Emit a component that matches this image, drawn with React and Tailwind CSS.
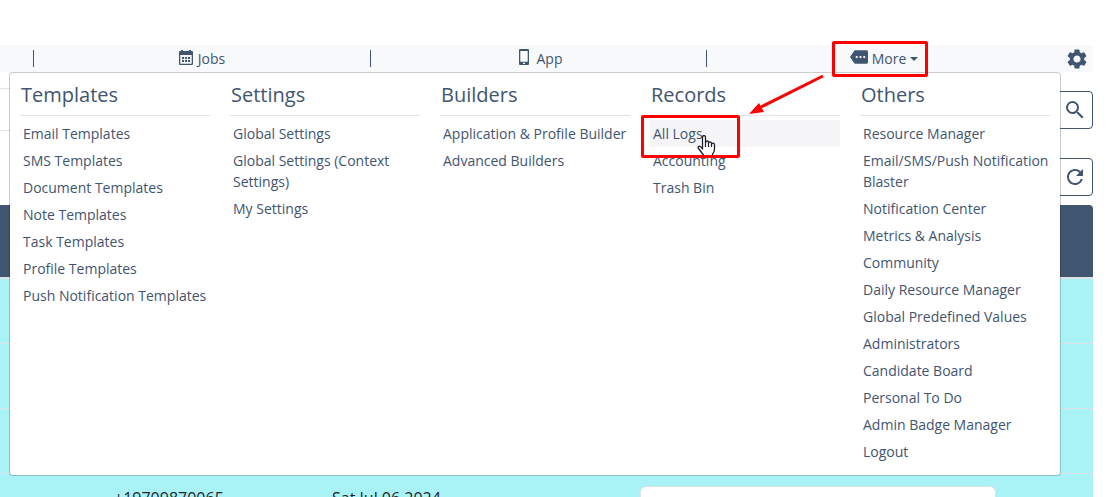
import React from 'react';
import { MdMore, MdRefresh, MdSearch, MdSettings } from 'react-icons/md';

const menuColumns = [
  {
    title: 'Templates',
    items: [
      'Email Templates',
      'SMS Templates',
      'Document Templates',
      'Note Templates',
      'Task Templates',
      'Profile Templates',
      'Push Notification Templates',
    ],
  },
  {
    title: 'Settings',
    items: [
      'Global Settings',
      'Global Settings (Context Settings)',
      'My Settings',
    ],
  },
  {
    title: 'Builders',
    items: ['Application & Profile Builder', 'Advanced Builders'],
  },
  {
    title: 'Records',
    items: ['All Logs', 'Accounting', 'Trash Bin'],
  },
  {
    title: 'Others',
    items: [
      'Resource Manager',
      'Email/SMS/Push Notification Blaster',
      'Notification Center',
      'Metrics & Analysis',
      'Community',
      'Daily Resource Manager',
      'Global Predefined Values',
      'Administrators',
      'Candidate Board',
      'Personal To Do',
      'Admin Badge Manager',
      'Logout',
    ],
  },
];

function CalendarIcon() {
  return (
    <svg className="mb-[3px]" width="14" height="15" viewBox="0 0 14 15" fill="currentColor">
      <path d="M2 0h2v1h6V0h2v1h1q1 0 1 1v12q0 1-1 1H1q-1 0-1-1V2q0-1 1-1h1zM1.300 5v8.700h11.400V5z" />
      <path d="M3 7h2v2H3zM6 7h2v2H6zM9 7h2v2H9zM3 10h2v2H3zM6 10h2v2H6zM9 10h2v2H9z" />
    </svg>
  );
}

function PhoneIcon() {
  return (
    <svg className="mx-1 mb-[3px]" width="10" height="16" viewBox="0 0 10 16" fill="currentColor">
      <path
        fillRule="evenodd"
        d="M1 0h8q1 0 1 1v14q0 1-1 1H1q-1 0-1-1V1q0-1 1-1zM1.300 2v10.700h7.400V2zM4 13.700v1.300h2v-1.300z"
      />
    </svg>
  );
}

function NavBar() {
  return (
    <nav className="grid grid-cols-[34px_337fr_336fr_354fr_32px] items-center h-[27px] rounded-r bg-[#f8f9fb] text-sm">
      <span className="h-[17px] border-r border-[#3f5570]" />
      <a
        href="#jobs"
        className="flex items-center justify-center gap-[5px] h-[17px] border-r border-[#3f5570]"
      >
        <CalendarIcon />
        Jobs
      </a>
      <a
        href="#app"
        className="flex items-center justify-center gap-1 h-[17px] border-r border-[#3f5570]"
      >
        <PhoneIcon />
        App
      </a>
      <button
        type="button"
        aria-expanded="true"
        className="flex items-center justify-center gap-1 h-[17px]"
      >
        <MdMore className="mb-[3px] size-[18px]" />
        More
        <span className="border-x-4 border-t-4 border-x-transparent border-t-[#3f5570]" />
      </button>
      <button
        type="button"
        aria-label="Preferences"
        className="flex justify-center"
      >
        <MdSettings className="size-6" />
      </button>
    </nav>
  );
}

function MegaMenu() {
  return (
    <div className="absolute top-[72px] left-[9px] right-[51px] z-10 grid grid-cols-5 rounded border border-black/20 bg-white bg-clip-padding pt-2 pb-[10px]">
      {menuColumns.map(({ title, items }) => (
        <section key={title} className="px-[10px]">
          <h2 className="pb-[6px] pl-px mb-1 border-b border-[#e2e3e5] text-xl leading-7">
            {title}
          </h2>
          <ul>
            {items.map((item) => (
              <li key={item}>
                <a
                  href="#menu"
                  className={
                    item === 'All Logs'
                      ? 'block pl-[3px] py-[3px] text-sm leading-[21px] bg-[#f5f5f7]'
                      : 'block pl-[3px] py-[3px] text-sm leading-[21px]'
                  }
                >
                  {item}
                </a>
              </li>
            ))}
          </ul>
        </section>
      ))}
    </div>
  );
}

function Results() {
  return (
    <table className="w-full table-fixed border-separate border-spacing-0 text-base text-[#212529]">
      <thead>
        <tr>
          <th className="h-[72px] w-[114px] bg-[#3f5570]" />
          <th className="w-[218px] bg-[#3f5570]" />
          <th className="w-[308px] bg-[#3f5570]" />
          <th className="rounded-tr bg-[#3f5570]" />
        </tr>
      </thead>
      <tbody>
        <tr>
          <td
            colSpan={4}
            className="h-[67px] border-t-2 border-b border-[#dee2e6] bg-[#a9f2f5]"
          />
        </tr>
        <tr>
          <td
            colSpan={4}
            className="h-[65px] border-b border-[#dee2e6] bg-[#a9f2f5]"
          />
        </tr>
        <tr>
          <td
            colSpan={4}
            className="h-[65px] border-b border-[#dee2e6] bg-[#a9f2f5]"
          />
        </tr>
        <tr className="align-top">
          <td className="bg-[#a9f2f5]" />
          <td className="bg-[#a9f2f5] pt-3">+19709870065</td>
          <td className="bg-[#a9f2f5] pt-3">Sat Jul 06 2024</td>
          <td className="bg-[#a9f2f5] pt-3 pr-[97px]">
            <textarea
              aria-label="Notes"
              className="block w-full h-20 resize-none rounded-md border border-[#dee2e6] bg-white"
            />
          </td>
        </tr>
      </tbody>
    </table>
  );
}

// Red frames, arrow and hand that sit on top of the menu
function Annotations() {
  return (
    <>
      <div className="pointer-events-none absolute top-[41px] left-[832px] z-20 h-9 w-24 rounded-xs border-3 border-[#ff0000]" />
      <div className="pointer-events-none absolute top-[115px] left-[641px] z-20 h-[43px] w-[99px] rounded-xs border-3 border-[#ff0000]" />
      <svg
        className="pointer-events-none absolute top-[70px] left-[745px] z-20"
        width="84"
        height="48"
        viewBox="0 0 84 48"
      >
        <path d="M78 6L16 37" stroke="#f00" strokeWidth="3" />
        <path d="M4 44L14 33L19 42Z" fill="#f00" />
      </svg>
      <svg
        className="pointer-events-none absolute top-[135px] left-[697px] z-10"
        width="20"
        height="23"
        viewBox="0 0 20 23"
      >
        <path
          d="M5.5 14V2.200Q5.500 .6 7 .6Q8.500 .6 8.500 2.200V7.500Q10 4.800 11.500 7V8Q13 5.700 14.500 8V9Q17.500 7 17.500 10V14Q17.500 17 15.500 19V22.500H6.500V20L1.500 13.500Q.3 11.500 2.500 11.200Q4 11.500 5.500 14Z"
          fill="#fff"
          stroke="#1b1d2b"
          strokeWidth="1.3"
          strokeLinejoin="round"
        />
        <path d="M8.500 7V12M11.500 8V12M14.500 9V12" stroke="#1b1d2b" strokeWidth="1.2" />
      </svg>
    </>
  );
}

function App() {
  return (
    <div className="relative h-screen overflow-hidden bg-white pt-[45px] pr-[19px] font-['Open_Sans',sans-serif] text-[#3f5570]">
      <NavBar />
      <MegaMenu />
      <div className="mt-4 flex items-start">
        <div className="h-[43px] flex-1 border-y border-[#e2e3e5]" />
        <button
          type="button"
          aria-label="Search"
          className="mt-[3px] flex h-[38px] w-9 items-center justify-center rounded border border-[#3f5570]"
        >
          <MdSearch className="size-6" />
        </button>
      </div>
      <div className="mt-[27px] mb-[9px] flex justify-end">
        <button
          type="button"
          aria-label="Refresh"
          className="flex h-[38px] w-9 items-center justify-center rounded border border-[#3f5570]"
        >
          <MdRefresh className="size-6" />
        </button>
      </div>
      <Results />
      <Annotations />
    </div>
  );
}

export default App;
